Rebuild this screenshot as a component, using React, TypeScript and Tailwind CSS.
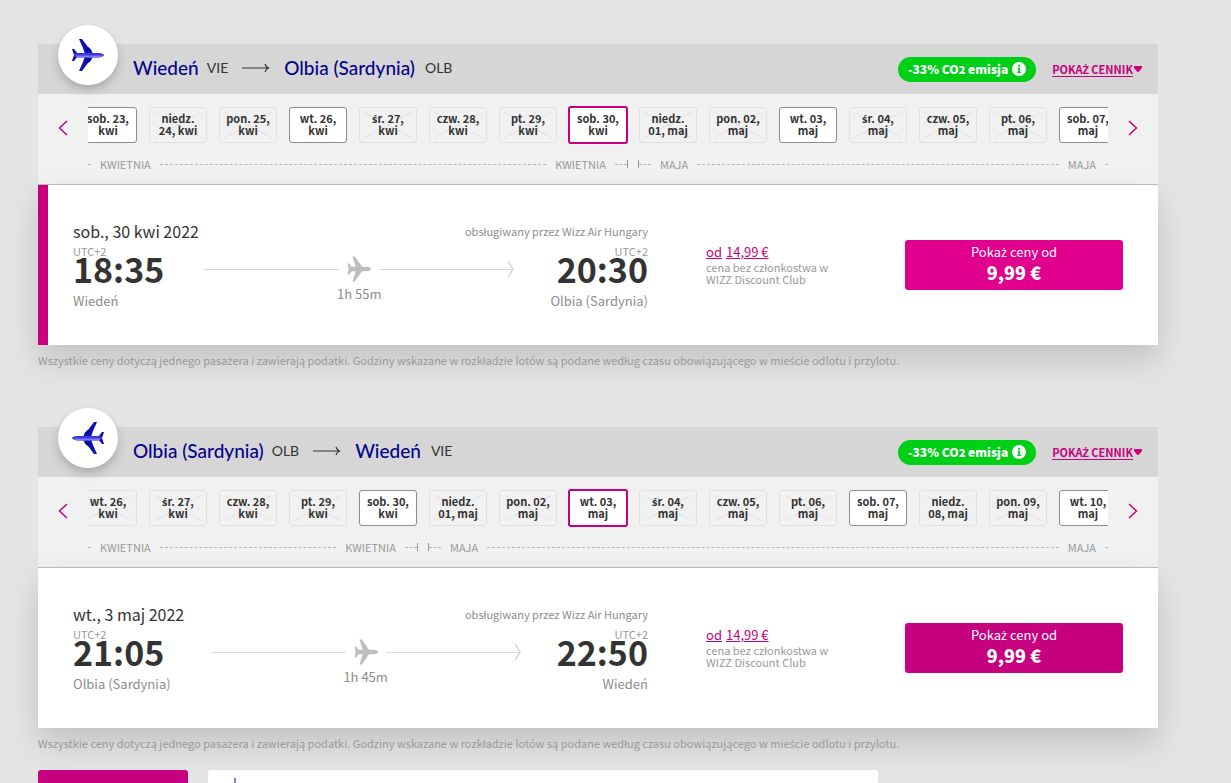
import React from "react";
import { clsx } from "clsx";

type Day = {
  top: string;
  bottom: string;
  state?: "open" | "selected";
};

type Flight = {
  id: string;
  from: string;
  fromCode: string;
  to: string;
  toCode: string;
  date: string;
  departure: string;
  arrival: string;
  duration: string;
  returning?: boolean;
  active?: boolean;
  days: Day[];
};

const flights: Flight[] = [
  {
    id: "outbound",
    from: "Wiedeń",
    fromCode: "VIE",
    to: "Olbia (Sardynia)",
    toCode: "OLB",
    date: "sob., 30 kwi 2022",
    departure: "18:35",
    arrival: "20:30",
    duration: "1h 55m",
    active: true,
    days: [
      { top: "sob. 23,", bottom: "kwi", state: "open" },
      { top: "niedz.", bottom: "24, kwi" },
      { top: "pon. 25,", bottom: "kwi" },
      { top: "wt. 26,", bottom: "kwi", state: "open" },
      { top: "śr. 27,", bottom: "kwi" },
      { top: "czw. 28,", bottom: "kwi" },
      { top: "pt. 29,", bottom: "kwi" },
      { top: "sob. 30,", bottom: "kwi", state: "selected" },
      { top: "niedz.", bottom: "01, maj" },
      { top: "pon. 02,", bottom: "maj" },
      { top: "wt. 03,", bottom: "maj", state: "open" },
      { top: "śr. 04,", bottom: "maj" },
      { top: "czw. 05,", bottom: "maj" },
      { top: "pt. 06,", bottom: "maj" },
      { top: "sob. 07,", bottom: "maj", state: "open" },
    ],
  },
  {
    id: "return",
    from: "Olbia (Sardynia)",
    fromCode: "OLB",
    to: "Wiedeń",
    toCode: "VIE",
    date: "wt., 3 maj 2022",
    departure: "21:05",
    arrival: "22:50",
    duration: "1h 45m",
    returning: true,
    days: [
      { top: "wt. 26,", bottom: "kwi" },
      { top: "śr. 27,", bottom: "kwi" },
      { top: "czw. 28,", bottom: "kwi" },
      { top: "pt. 29,", bottom: "kwi" },
      { top: "sob. 30,", bottom: "kwi", state: "open" },
      { top: "niedz.", bottom: "01, maj" },
      { top: "pon. 02,", bottom: "maj" },
      { top: "wt. 03,", bottom: "maj", state: "selected" },
      { top: "śr. 04,", bottom: "maj" },
      { top: "czw. 05,", bottom: "maj" },
      { top: "pt. 06,", bottom: "maj" },
      { top: "sob. 07,", bottom: "maj", state: "open" },
      { top: "niedz.", bottom: "08, maj" },
      { top: "pon. 09,", bottom: "maj" },
      { top: "wt. 10,", bottom: "maj", state: "open" },
    ],
  },
];

const Polish = ({ children }: { children: string }) => (
  <>
    {children.split(/([żŻśŚ])/).map((part, index) =>
      /^[żŻśŚ]$/.test(part) ? (
        <span key={index} className="font-['Open_Sans',sans-serif] leading-none">
          {part}
        </span>
      ) : (
        part
      )
    )}
  </>
);

const BadgePlane = ({ flipped }: { flipped?: boolean }) => (
  <svg
    viewBox="0 0 32 32"
    className={clsx("h-8 w-8", flipped && "-scale-x-100")}
    aria-hidden="true"
  >
    <path d="M7 0h3l6 8 3 2.500 2 4.500h-8L11 9z" fill="#0f0fb4" />
    <path d="M7 32h3l6-8 3-2.500 2-4.500h-8l-2 6z" fill="#0f0fb4" />
    <path d="M14 8.500h3l2.500 3.500h-4z" fill="#06038d" />
    <path d="M14 23.500h3l2.500-3.500h-4z" fill="#06038d" />
    <path d="M0 10h2l4 5-1 1H2z" fill="#0f0fb4" />
    <path d="M0 22h2l4-5-1-1H2z" fill="#0f0fb4" />
    <path d="M2 14.500 6 14h20c3 0 6 1 6 2s-3 2.500-6 2.500H6L2 17z" fill="#3a36e0" />
    <path d="M3 16.500h28c-1 1.200-3 2-5 2H6z" fill="#7f7cf5" />
  </svg>
);

const GreyPlane = () => (
  <svg viewBox="0 0 24 26" className="h-[26px] w-6 shrink-0" aria-hidden="true">
    <path
      d="M5.500.500h2.300l7.200 10.300h5c2.200 0 4 1 4 2.200s-1.800 2.200-4 2.200h-5L7.800 25.500H5.500l3.300-10.300H4.600L2 18.500H.400L1.700 13 .400 7.500H2l2.600 3.300h4.200z"
      fill="#bdbdbd"
    />
  </svg>
);

const Chevron = ({ left }: { left?: boolean }) => (
  <svg
    viewBox="0 0 10 16"
    className={clsx("h-4 w-[10px]", left && "rotate-180")}
    fill="none"
    stroke="#c6007e"
    strokeWidth="1.500"
    aria-hidden="true"
  >
    <path d="M1 1l7.500 7L1 15" />
  </svg>
);

const RouteArrow = () => (
  <svg
    viewBox="0 0 28 10"
    className="mx-[14px] h-[10px] w-7"
    fill="none"
    stroke="#333"
    strokeWidth="1.200"
    aria-hidden="true"
  >
    <path d="M0 5h26M23 1q1 3 3.500 4Q24 6 23 9" />
  </svg>
);

const DayButton = ({ day }: { day: Day }) => (
  <button
    disabled={!day.state}
    className={clsx(
      "relative flex shrink-0 flex-col items-center justify-center rounded-[3px] pb-[2px] text-[11px] font-bold leading-3 text-[#333]",
      !day.state && "h-9 w-[58px] border border-[#e0e0e0]",
      day.state === "open" && "h-9 w-[58px] border border-[#8c8c8c] bg-white",
      day.state === "selected" && "h-[38px] w-[60px] border-2 border-[#c6007e] bg-white"
    )}
  >
    {!day.state && (
      <svg
        viewBox="0 0 50 26"
        preserveAspectRatio="none"
        className="absolute inset-1 h-[26px] w-[48px]"
        stroke="#e0e0e0"
        aria-hidden="true"
      >
        <path d="M0 0l50 26M50 0L0 26" />
      </svg>
    )}
    <span className="relative whitespace-nowrap">
      <Polish>{day.top}</Polish>
    </span>
    <span className="relative whitespace-nowrap">{day.bottom}</span>
  </button>
);

const Dashes = ({ className }: { className?: string }) => (
  <span className={clsx("border-t border-dashed border-[#b5b5b5]", className)} />
);

const MonthRange = ({ name, count, first }: { name: string; count: number; first?: boolean }) => (
  <div
    className="flex min-w-0 shrink-0 items-center gap-[9px] px-[5px] text-[11px] leading-4 text-[#999]"
    style={{ width: `${(count / 15) * 100}%` }}
  >
    <span className={clsx("flex h-2 w-[13px] items-center", !first && "border-l border-[#999]")}>
      <Dashes className="w-full" />
    </span>
    <span>{name}</span>
    <Dashes className="flex-1" />
    <span>{name}</span>
    <span className={clsx("flex h-2 w-[13px] items-center", first && "border-r border-[#999]")}>
      <Dashes className="w-full" />
    </span>
  </div>
);

const Calendar = ({ days }: { days: Day[] }) => {
  const aprilCount = days.filter((day) => day.bottom.includes("kwi")).length;

  return (
    <div className="flex h-[91px] border-b border-[#bdbdbd] bg-[#f1f1f1]">
      <button className="flex h-[68px] w-[50px] items-center justify-center" aria-label="Poprzednie dni">
        <Chevron left />
      </button>
      <div className="min-w-0 flex-1 overflow-hidden">
        <div className="-mx-[15px]">
          <div className="flex h-[62px] items-center">
            {days.map((day) => (
              <div key={day.top + day.bottom} className="flex flex-1 basis-0 justify-center">
                <DayButton day={day} />
              </div>
            ))}
          </div>
          <div className="flex">
            <MonthRange name="KWIETNIA" count={aprilCount} first />
            <MonthRange name="MAJA" count={days.length - aprilCount} />
          </div>
        </div>
      </div>
      <button className="flex h-[68px] w-[50px] items-center justify-center" aria-label="Następne dni">
        <Chevron />
      </button>
    </div>
  );
};

const FlightHeader = ({ flight }: { flight: Flight }) => (
  <div className="relative flex h-[50px] items-center justify-between bg-[#d6d6d6] pl-[95px] pr-4">
    <div className="absolute -top-[19px] left-5 flex h-[60px] w-[60px] items-center justify-center rounded-full bg-white shadow-[0_5px_10px_rgba(0,0,0,0.2)]">
      <BadgePlane flipped={flight.returning} />
    </div>
    <h2 className="flex items-center pb-[2px] font-['Lato',sans-serif] text-[19px] text-[#06038d]">
      <span className="font-medium">{flight.from}</span>
      <span className="ml-2 text-sm text-[#333]">{flight.fromCode}</span>
      <RouteArrow />
      <span className="font-medium">{flight.to}</span>
      <span className="ml-[10px] text-sm text-[#333]">{flight.toCode}</span>
    </h2>
    <div className="flex items-center gap-4">
      <span className="flex h-[25px] items-center gap-1 rounded-full bg-[#00cf17] px-[10px] text-xs font-black text-white">
        <span>
          -33% CO<span className="text-[11px]">2</span> emisja
        </span>
        <svg viewBox="0 0 14 14" className="h-[14px] w-[14px]" aria-hidden="true">
          <circle cx="7" cy="7" r="7" fill="#fff" />
          <path d="M5.500 5.500H8v4.300h1V11H5.200V9.800h1V6.700h-.7zM6 2.700h2v1.700H6z" fill="#00cf17" />
        </svg>
      </span>
      <a href="#cennik" className="flex items-center text-[11px] font-bold text-[#c6007e]">
        <span className="underline underline-offset-2">
          <Polish>POKAŻ CENNIK</Polish>
        </span>
        <svg viewBox="0 0 8 6" className="ml-px h-[6px] w-2" aria-hidden="true">
          <path d="M0 0h8v2L4.500 6h-1L0 2z" fill="#c6007e" />
        </svg>
      </a>
    </div>
  </div>
);

const FlightPath = ({ duration }: { duration: string }) => (
  <div className="ml-10 mr-9 flex flex-1 flex-col items-center pt-[11px]">
    <div className="flex w-full items-center gap-2">
      <span className="h-px flex-1 bg-[#d9d9d9]" />
      <GreyPlane />
      <span className="flex flex-1 items-center">
        <span className="h-px flex-1 bg-[#d9d9d9]" />
        <svg
          viewBox="0 0 6 18"
          className="-ml-[5px] h-[18px] w-[6px]"
          fill="none"
          stroke="#d9d9d9"
          strokeWidth="1.500"
          aria-hidden="true"
        >
          <path d="M0 1l5 8-5 8" />
        </svg>
      </span>
    </div>
    <span className="text-[13px] leading-6 text-[#8c8c8c]">{duration}</span>
  </div>
);

const Stop = ({ time, city, right }: { time: string; city: string; right?: boolean }) => (
  <div className={clsx("flex flex-col", right && "items-end")}>
    <span className="text-[11px] leading-3 text-[#999]">UTC+2</span>
    <span className="text-[34px] font-bold leading-6 text-[#333]">{time}</span>
    <span className="mt-[10px] text-[13px] leading-5 text-[#8c8c8c]">{city}</span>
  </div>
);

const FlightCard = ({ flight }: { flight: Flight }) => (
  <div
    className={clsx(
      "flex h-40 bg-white pr-[35px] shadow-[0_15px_30px_rgba(0,0,0,0.15)]",
      flight.active ? "border-l-[10px] border-[#c6007e] pl-[25px]" : "pl-[35px]"
    )}
  >
    <div className="flex-1 pt-[34px]">
      <div className="flex items-center justify-between">
        <span className="text-base leading-6 text-[#333]">{flight.date}</span>
        <span className="text-[11px] leading-6 text-[#8c8c8c]">obsługiwany przez Wizz Air Hungary</span>
      </div>
      <div className="flex pt-[2px]">
        <Stop time={flight.departure} city={flight.from} />
        <FlightPath duration={flight.duration} />
        <Stop time={flight.arrival} city={flight.to} right />
      </div>
    </div>
    <div className="ml-[58px] w-[199px] pt-[59px] text-[11px] leading-3 text-[#999]">
      <a href="#cena" className="flex gap-1 text-[13px] leading-4 text-[#c6007e]">
        <span className="underline">od</span>
        <span className="underline">14,99 €</span>
      </a>
      <p className="w-[130px] pt-[1px]">cena bez członkostwa w WIZZ Discount Club</p>
    </div>
    <button
      className={clsx(
        "mt-[55px] flex h-[50px] w-[218px] flex-col items-center justify-center rounded-[3px] pb-[6px] text-white",
        flight.active ? "bg-[#e1008d]" : "bg-[#c6007e]"
      )}
    >
      <span className="text-[13px] leading-5">
        <Polish>Pokaż ceny od</Polish>
      </span>
      <span className="text-lg font-black leading-5">9,99 €</span>
    </button>
  </div>
);

const App = () => {
  return (
    <main className="h-screen overflow-hidden bg-[#e4e4e4] pl-[38px] pr-[73px] pt-11 font-['Noto_Sans_CJK_SC','Noto_Sans',sans-serif]">
      <div className="flex flex-col gap-[50px]">
        {flights.map((flight) => (
          <section key={flight.id}>
            <FlightHeader flight={flight} />
            <Calendar days={flight.days} />
            <FlightCard flight={flight} />
            <p className="pb-[7px] pt-[5px] text-[11px] leading-5 text-[#999]">
              <Polish>
                Wszystkie ceny dotyczą jednego pasażera i zawierają podatki. Godziny wskazane w rozkładzie lotów są podane według czasu obowiązującego w mieście odlotu i przylotu.
              </Polish>
            </p>
          </section>
        ))}
      </div>
      <div className="mt-[10px] flex gap-5">
        <div className="h-20 w-[150px] rounded-[3px] bg-[#c6007e]" />
        <div className="h-20 w-[670px] rounded-[3px] bg-white pl-[26px] pt-2">
          <svg viewBox="0 0 2 14" className="h-[14px] w-[2px]" aria-hidden="true">
            <path d="M0 0h2v14H0z" fill="#8280c4" />
          </svg>
        </div>
      </div>
    </main>
  );
};

export default App;
